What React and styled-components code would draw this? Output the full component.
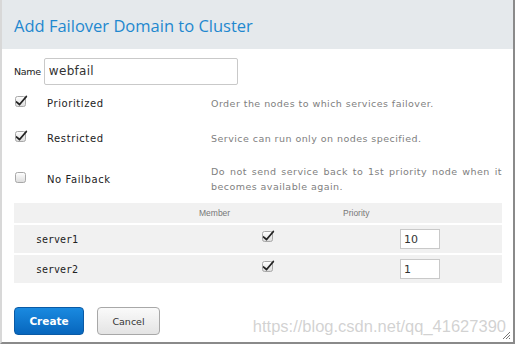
import React from 'react'
import styled, { createGlobalStyle } from 'styled-components'

const GlobalStyle = createGlobalStyle`
  html, body { margin: 0; padding: 0; background: #fff; }
  body { width: 518px; height: 346px; overflow: hidden; font-family: "DejaVu Sans", Verdana, sans-serif; }
`

function Check({ checked }) {
    return (
        <Box>
            <svg width="14" height="14" viewBox="0 0 14 14">
                <defs>
                    <linearGradient id="cbg" x1="0" y1="0" x2="0" y2="1">
                        <stop offset="0" stopColor="#ffffff" />
                        <stop offset="1" stopColor="#dcdcdc" />
                    </linearGradient>
                </defs>
                <rect x="1.5" y="2.5" width="10" height="10" rx="2" fill="url(#cbg)" stroke="#a8a8a8" />
                {checked && (
                    <path d="M2.3 6.8 L5.5 9.2 L12.3 1.2 L13.3 2.8 L5.6 11.8 L1.8 8.4 Z" fill="#222" />
                )}
            </svg>
        </Box>
    )
}

const options = [
    { label: 'Prioritized', checked: true, desc: 'Order the nodes to which services failover.' },
    { label: 'Restricted', checked: true, desc: 'Service can run only on nodes specified.' },
    { label: 'No Failback', checked: false, desc: 'Do not send service back to 1st priority node when it becomes available again.' },
]

const nodes = [
    { name: 'server1', priority: '10' },
    { name: 'server2', priority: '1' },
]

function App() {
    return (
        <>
            <GlobalStyle />
            <Dialog>
                <Header>
                    <Title>Add Failover Domain to Cluster</Title>
                </Header>
                <Body>
                    <NameRow>
                        <NameLabel>Name</NameLabel>
                        <NameInput defaultValue="webfail" />
                    </NameRow>
                    <Options>
                        {options.map(o => (
                            <OptionRow key={o.label} $tall={o.desc.length > 50}>
                                <Check checked={o.checked} />
                                <OptionLabel>{o.label}</OptionLabel>
                                <OptionDesc>{o.desc}</OptionDesc>
                            </OptionRow>
                        ))}
                    </Options>
                    <Table>
                        <HeadRow>
                            <span />
                            <HeadCell>Member</HeadCell>
                            <HeadCell>Priority</HeadCell>
                        </HeadRow>
                        {nodes.map(n => (
                            <Row key={n.name}>
                                <NodeName>{n.name}</NodeName>
                                <Cell><Check checked /></Cell>
                                <Cell><PriorityInput defaultValue={n.priority} /></Cell>
                            </Row>
                        ))}
                    </Table>
                </Body>
                <Footer>
                    <PrimaryButton>Create</PrimaryButton>
                    <Button>Cancel</Button>
                    <Watermark>https://blog.csdn.net/qq_41627390</Watermark>
                    <Grip>
                        <svg width="9" height="9" viewBox="0 0 9 9">
                            <path d="M1 8 L8 1 M4 8 L8 4 M7 8 L8 7" stroke="#777" strokeWidth="1" />
                        </svg>
                    </Grip>
                </Footer>
            </Dialog>
        </>
    )
}

export default App

const Dialog = styled.div`
    position: relative;
    width: 515px;
    height: 344px;
    box-sizing: border-box;
    border-left: 2px solid #d8d8d8;
    border-right: 2px solid #8a8a8a;
    border-bottom: 2px solid #8a8a8a;
    display: flex;
    flex-direction: column;
`

const Header = styled.div`
    height: 49px;
    flex-shrink: 0;
    background: #e5e9ec;
    display: flex;
    align-items: center;
    padding-left: 12px;
`

const Title = styled.h1`
    margin: 0 0 -2px;
    font-family: "Open Sans", "Liberation Sans", sans-serif;
    font-weight: 400;
    font-size: 16.5px;
    color: #1f88cf;
`

const Body = styled.div`
    padding: 8px 11px 0 12px;
    display: flex;
    flex-direction: column;
`

const NameRow = styled.div`
    display: flex;
    align-items: center;
    gap: 3px;
    height: 28px;
`

const NameLabel = styled.span`
    font-size: 9.5px;
    color: #222;
    letter-spacing: -0.3px;
`

const NameInput = styled.input`
    width: 194px;
    height: 27px;
    box-sizing: border-box;
    border: 1px solid #c9c9c9;
    border-radius: 2px;
    padding: 0 4px;
    font-family: "DejaVu Sans", sans-serif;
    font-size: 12px;
    letter-spacing: 0.3px;
    color: #333;
    outline: none;
`

const Options = styled.div`
    margin-top: 1px;
    display: flex;
    flex-direction: column;
`

const OptionRow = styled.div`
    display: grid;
    grid-template-columns: 33px 164px 1fr;
    align-items: center;
    height: ${p => (p.$tall ? '47px' : '35px')};
`

const Box = styled.span`
    display: inline-flex;
    width: 14px;
    height: 14px;
    margin-top: -6px;
`

const OptionLabel = styled.span`
    font-size: 10px;
    color: #222;
    letter-spacing: 0.6px;
`

const OptionDesc = styled.span`
    font-size: 9.5px;
    line-height: 15px;
    color: #808080;
    text-align: justify;
    letter-spacing: 0.45px;
    margin-top: -1px;
`

const Table = styled.div`
    width: 488px;
    display: flex;
    flex-direction: column;
    gap: 2px;
`

const Row = styled.div`
    display: grid;
    grid-template-columns: 247px 139px 1fr;
    height: 28px;
    align-items: center;
    background: #f1f1f1;
`

const HeadRow = styled(Row)`
    height: 20px;
    grid-template-columns: 185px 144px 1fr;
`

const Cell = styled.div`
    display: flex;
    align-items: center;
`

const HeadCell = styled.div`
    font-family: "Liberation Sans", Arial, sans-serif;
    font-size: 8.5px;
    color: #777;
`

const NodeName = styled.div`
    font-family: "DejaVu Sans Mono", monospace;
    font-size: 10px;
    color: #222;
    padding-left: 22px;
`

const PriorityInput = styled.input`
    width: 40px;
    height: 20px;
    box-sizing: border-box;
    border: 1px solid #c9c9c9;
    padding: 0 3px;
    font-family: "DejaVu Sans", sans-serif;
    font-size: 11px;
    color: #333;
    outline: none;
`

const Footer = styled.div`
    margin-top: auto;
    display: flex;
    align-items: flex-end;
    padding: 0 0 7px 12px;
    gap: 13px;
`

const PrimaryButton = styled.button`
    width: 70px;
    height: 28px;
    border-radius: 4px;
    border: 1px solid #0a5aa5;
    background: linear-gradient(#1a8ae0, #0766bd);
    color: #fff;
    font-family: "DejaVu Sans", sans-serif;
    font-weight: bold;
    font-size: 10.5px;
`

const Button = styled.button`
    width: 63px;
    height: 28px;
    border-radius: 4px;
    border: 1px solid #a8a8a8;
    background: linear-gradient(#fafafa, #e4e4e4);
    color: #333;
    font-family: "DejaVu Sans", sans-serif;
    font-size: 9.5px;
`

const Watermark = styled.span`
    position: absolute;
    right: 7px;
    bottom: 6px;
    font-family: "Liberation Sans", Arial, sans-serif;
    font-size: 16.5px;
    color: rgba(180, 180, 180, 0.6);
`

const Grip = styled.span`
    position: absolute;
    right: 2px;
    bottom: 2px;
    display: flex;
`
